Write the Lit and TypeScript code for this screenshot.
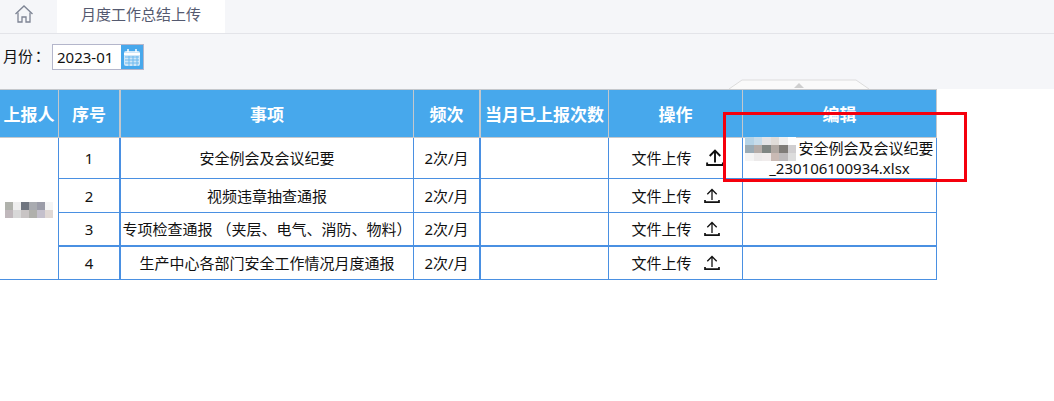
import { LitElement, html, css, svg } from "lit";
import { customElement } from "lit/decorators.js";

const ROWS = [
  { n: "1", t: "安全例会及会议纪要", cls: "r1" },
  { n: "2", t: "视频违章抽查通报", cls: "r2" },
  { n: "3", t: "专项检查通报 （夹层、电气、消防、物料）", cls: "r3" },
  { n: "4", t: "生产中心各部门安全工作情况月度通报", cls: "r4" },
];
const M1 = ["#b5d3e6","#c7dcea","#e4e4e6","#e0dcd8","#f0f0f0","#ffffff","#9aabb5","#b4aca8","#7f8683","#b0a8a2","#7f7c78","#d0ced0","#f4f4f4","#eceaea","#f0ecec","#c9bab4","#bdbabb","#dcdcdc"];
const M2 = ["#b0b2ac","#eeeeee","#707680","#a9abb0","#9b9ca8","#f5f5f5","#c0b8bc","#d8d8d8","#c8c4c4","#b0b0ac","#c4c0cc","#e0d8d4"];

const upload = svg`<path d="M8 12V1.500M3.300 6.200L8 1.500l4.700 4.700" fill="none" stroke="currentColor" stroke-width="1.300"/><path d="M1 12v2.200h14V12" fill="none" stroke="currentColor" stroke-width="1.700"/>`;

@customElement("app-root")
export class AppRoot extends LitElement {
  static styles = css`
    :host { display: block; position: relative; width: 1054px; height: 401px; overflow: hidden; background: #fff;
      font-family: "Noto Sans", "Noto Sans CJK SC", sans-serif; font-size: 15px; color: #111; }
    .tabs { height: 33px; background: #f5f6f9; border-bottom: 1px solid #e3e4e9; display: flex; }
    .home { width: 57px; display: flex; align-items: flex-start; padding: 4px 0 0 14px; box-sizing: border-box; }
    .tab { width: 168px; background: #fff; color: #555a70; text-align: center; line-height: 28px; height: 33px; }
    .filter { height: 55px; background: #f5f6f9; display: flex; align-items: flex-start; padding-top: 10px; box-sizing: border-box; }
    .lbl { margin-left: 3px; line-height: 24px; width: 49px; white-space: nowrap; }
    .colon { font-family: "Noto Sans CJK TC", sans-serif; margin-left: -2px; }
    .date { width: 69px; height: 26px; box-sizing: border-box; border: 1px solid #b4b6cb; border-right: 0; background: #fff; padding-left: 4px; line-height: 24px; }
    .cal { width: 23px; height: 26px; box-sizing: border-box; background: #47a8ec; border: 1px solid #b4b6cb; border-left: 0; display: flex; align-items: center; justify-content: center; }
    table { border-collapse: separate; border-spacing: 0; table-layout: fixed; width: 937px; }
    th { background: #47a8ec; color: #fff; font-size: 17px; font-weight: 700; height: 49px; padding: 0; box-sizing: border-box; white-space: nowrap;
      border-right: 1px solid #c5c8cc; border-bottom: 1px solid #c5c8cc; border-top: 1px solid #c5c8cc; }
    td { padding: 0; text-align: center; box-sizing: border-box; border-right: 1px solid #4a90e2; border-bottom: 1px solid #4a90e2; line-height: 20px; white-space: nowrap; }
    .thick { border-right-width: 2px; }
    .r1 td { height: 41px; } .r2 td { height: 34px; } .r3 td { height: 34px; } .r4 td { height: 33px; }
    .r3 td { border-bottom-width: 2px; }
    .up { display: flex; align-items: center; justify-content: center; gap: 12px; }
    .up svg { width: 16px; height: 16px; color: #111; }
    .r1 .up svg { width: 18px; height: 18px; stroke-width: 1.700; }
    .r1 .up svg path { stroke-width: 1.700; }
    .r1 .up { gap: 14px; padding-left: 4px; }
    .gap { display: inline-block; width: 53px; }
    .who, .name { display: inline-grid; }
    .who { grid-template-columns: repeat(6, 8px); grid-auto-rows: 8px; filter: blur(.6px); vertical-align: middle; }
    .name { position: absolute; left: 745px; top: 137px; grid-template-columns: repeat(6, 8.500px); grid-auto-rows: 8px; filter: blur(.6px); }
    .px { background: var(--c); }
    .red { position: absolute; left: 723px; top: 112px; width: 244px; height: 70px; box-sizing: border-box; border: 3px solid #f5000d; }
    .handle { position: absolute; left: 728px; top: 79px; width: 142px; height: 10px; }
  `;
  private px(list: string[]) {
    return list.map((c) => html`<span class="px" style="--c:${c}"></span>`);
  }
  render() {
    return html`
      <div class="tabs">
        <div class="home"><svg width="20" height="20" viewBox="0 0 20 20" fill="none" stroke="#7d8494" stroke-width="1.300">
          <path d="M1.500 10L10 2l8.500 8"/><path d="M4 8.500V18h4v-5h4v5h4V8.500"/></svg></div>
        <div class="tab">月度工作总结上传</div>
      </div>
      <div class="filter">
        <span class="lbl">月份<span class="colon">：</span></span><span class="date">2023-01</span>
        <span class="cal"><svg width="18" height="19" viewBox="0 0 18 19"><rect x="1" y="3" width="16" height="15" rx="2" fill="#cfe7f8"/>
          <path d="M1 6h16" stroke="#fff" stroke-width="2"/><path d="M5 1v3M13 1v3" stroke="#fff" stroke-width="1.500"/>
          <path d="M2 9h14M2 12h14M2 15h14M6 8v10M10 8v10M14 8v10" stroke="#6db9ef"/></svg></span>
      </div>
      <table>
        <colgroup><col style="width:59px"/><col style="width:62px"/><col style="width:293px"/><col style="width:67px"/><col style="width:128px"/><col style="width:134px"/><col style="width:194px"/></colgroup>
        <thead><tr><th>上报人</th><th class="thick">序号</th><th>事项</th><th class="thick">频次</th><th>当月已上报次数</th><th>操作</th><th>编辑</th></tr></thead>
        <tbody>
          ${ROWS.map((r, i) => html`<tr class=${r.cls}>
            ${i === 0 ? html`<td rowspan="4"><span class="who">${this.px(M2)}</span></td>` : ""}
            <td class="thick">${r.n}</td><td>${r.t}</td><td class="thick">2次/月</td><td></td>
            <td><div class="up">文件上传<svg viewBox="0 0 16 16">${upload}</svg></div></td>
            <td>${i === 0 ? html`<span class="gap"></span>安全例会及会议纪要<br/>_230106100934.xlsx` : ""}</td>
          </tr>`)}
        </tbody>
      </table>
      <div class="name">${this.px(M1)}</div>
      <svg class="handle" viewBox="0 0 142 10"><path d="M1 10L14 1h114l13 9" fill="#fafafa" stroke="#dcdcdc"/><path d="M66 9l5-5 5 5z" fill="#cfcfcf"/></svg>
      <div class="red"></div>
    `;
  }
}
